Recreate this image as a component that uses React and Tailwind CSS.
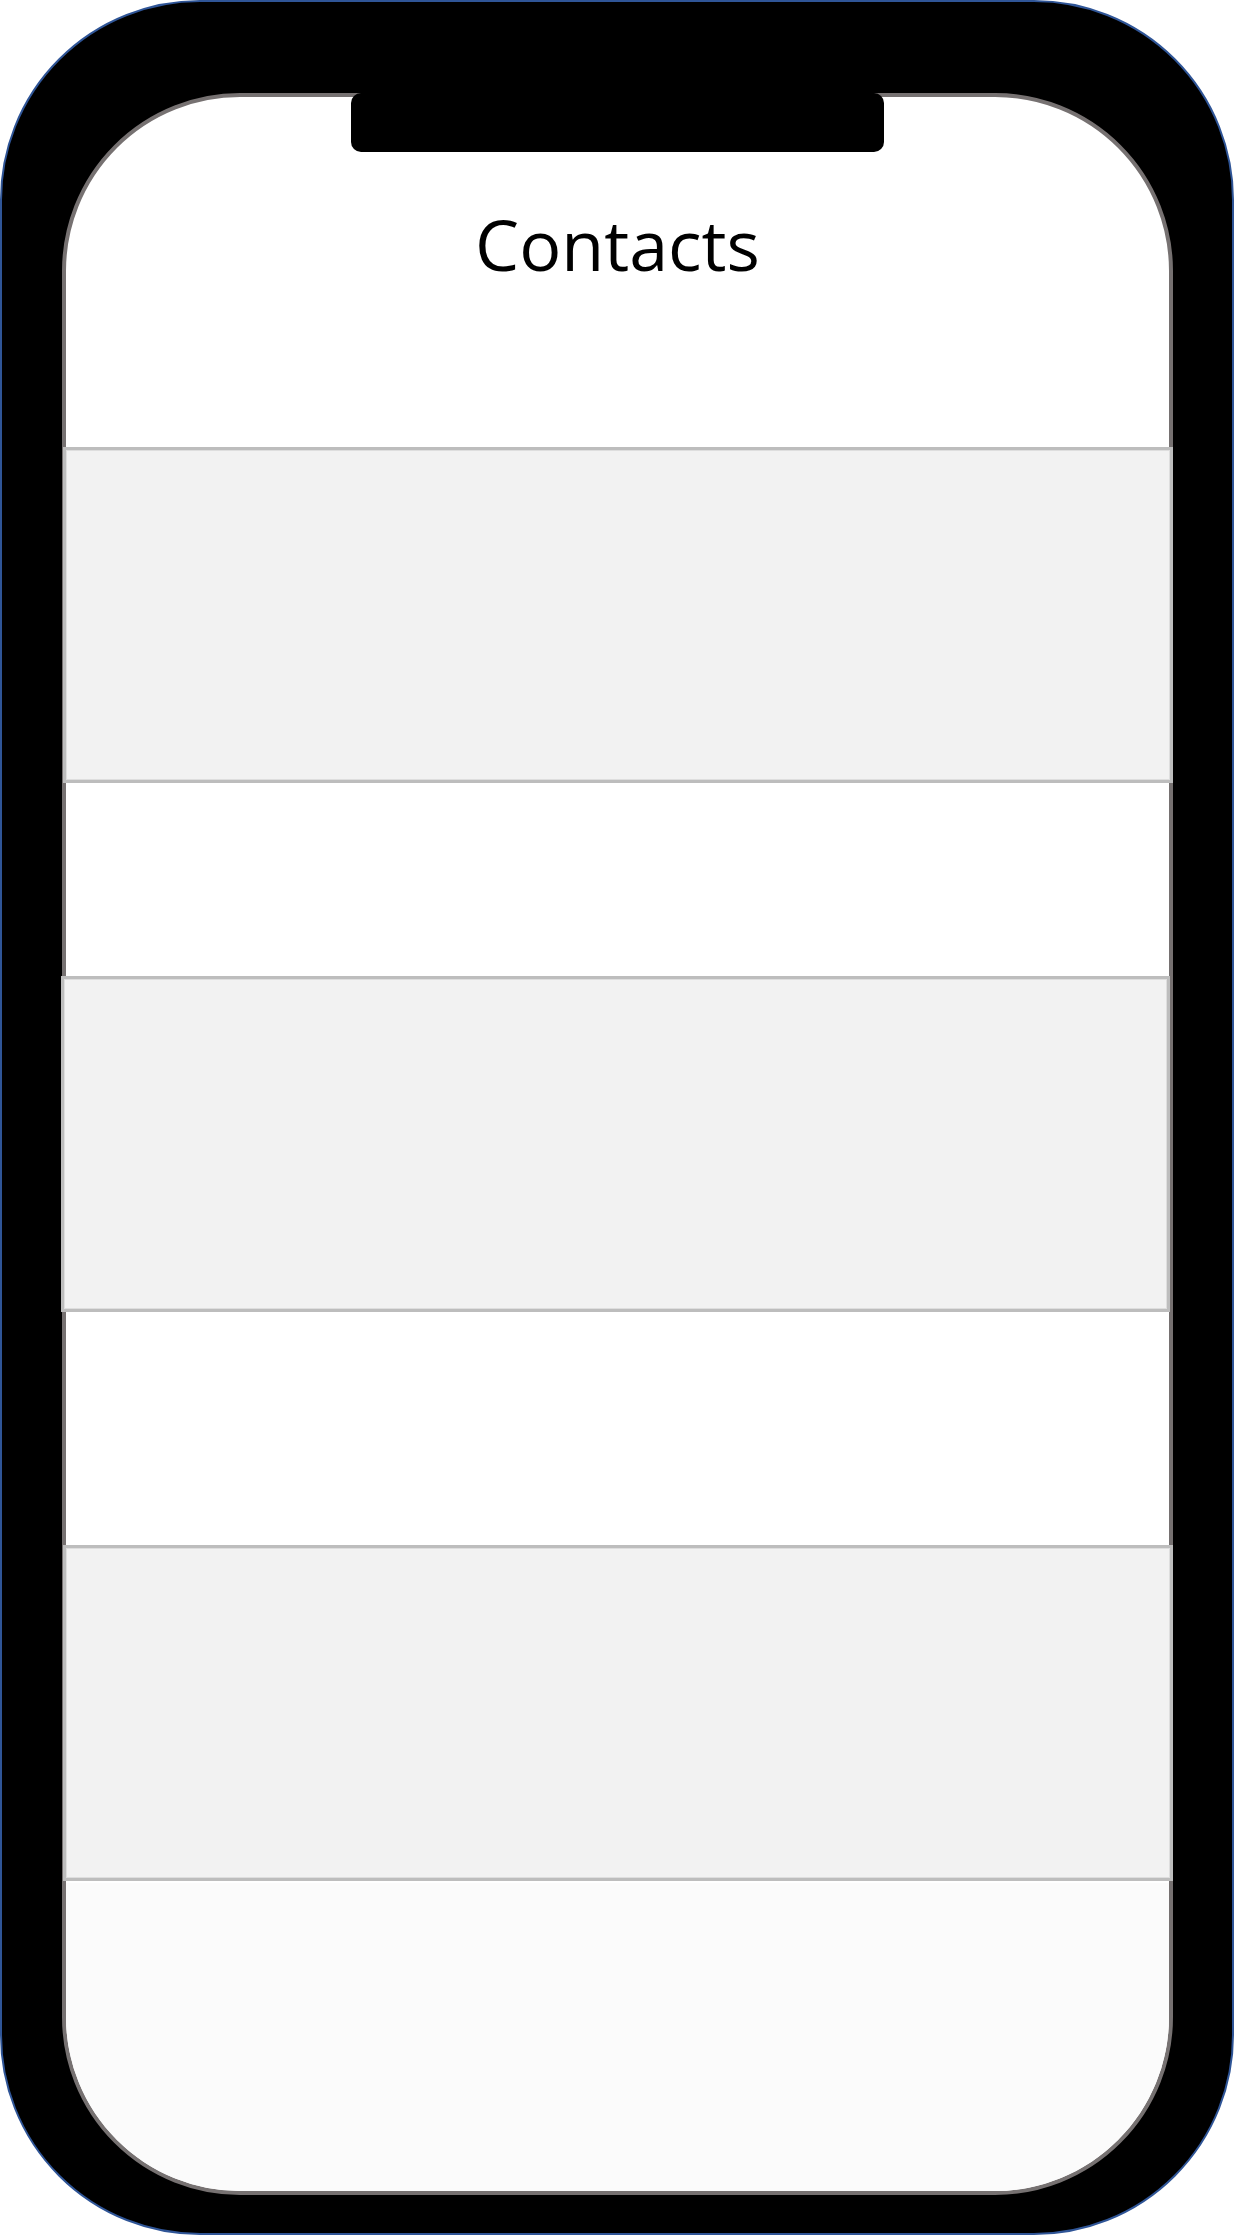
export default function App() {
  const rowCls =
    "h-[336px] bg-[#f2f2f2] border-[3px] border-[#bdbdbd] shadow-[inset_0_0_0_1px_#dedede]";
  return (
    <div className="w-[1234px] h-[2235px] bg-white">
      <div className="w-[1234px] h-[2235px] rounded-[200px] bg-black border-2 border-[#2f5597] pl-[60px] pr-[59px] pt-[91px] pb-[38px] flex">
        <div className="relative flex-1 flex flex-col rounded-[178px] border-4 border-[#767171] bg-white">
          <div className="absolute left-[285px] top-[-4px] w-[533px] h-[59px] rounded-[10px] bg-black" />
          <h1
            className="mt-[112px] text-center text-[70px] leading-[70px] text-black"
            style={{ fontFamily: '"Open Sans", sans-serif' }}
          >
            Contacts
          </h1>
          <div className={`mt-[168px] ml-[-3px] mr-[-4px] ${rowCls}`} />
          <div className={`mt-[193px] ml-[-5px] mr-[-1px] ${rowCls}`} />
          <div className={`mt-[233px] ml-[-3px] mr-[-4px] ${rowCls}`} />
          <div className="flex-1 mt-[2px] rounded-b-[174px] bg-[#fbfbfb]" />
        </div>
      </div>
    </div>
  );
}
